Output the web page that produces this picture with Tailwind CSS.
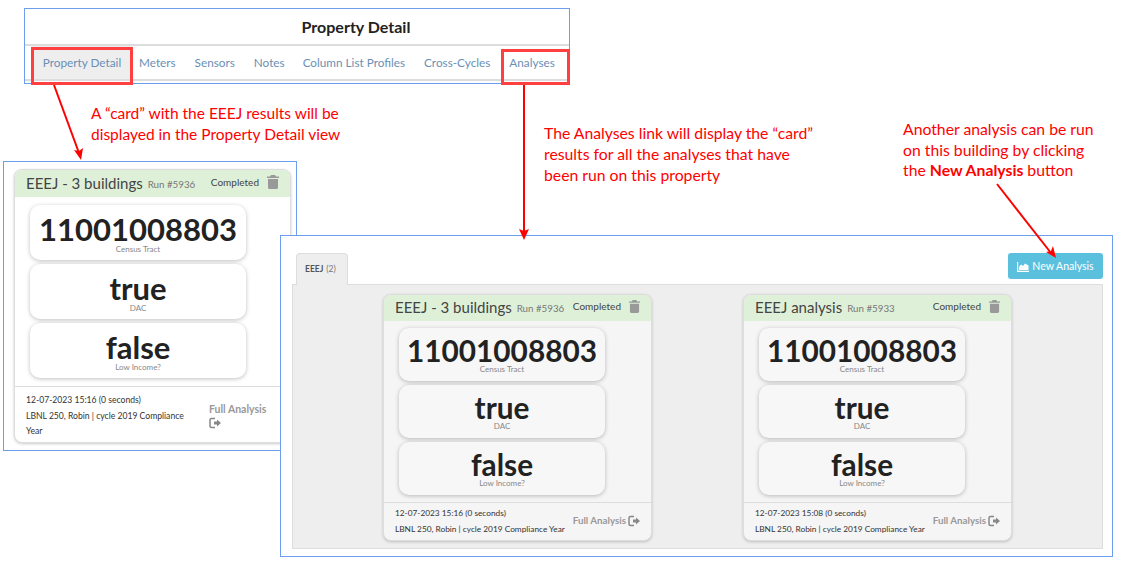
<!DOCTYPE html>
<html lang="en">
<head>
  <meta charset="UTF-8">
  <title>EEEJ Analysis Cards</title>
  <script src="https://cdn.jsdelivr.net/npm/@tailwindcss/browser@4"></script>
</head>
<body class="bg-white">
  <div class="relative w-[1121px] h-[563px] overflow-hidden font-['Lato','Noto_Sans',sans-serif] text-[#333]">

    <!-- Property nav window -->
    <div class="absolute left-[24px] top-[8px] w-[546px] h-[76px] border border-[#6d9eeb] bg-white flex flex-col">
      <div class="h-[37px] flex items-center justify-center pl-[118px] border-b-2 border-[#ddd] text-[16px] font-bold text-[#222]">Property Detail</div>
      <div class="h-[35px] flex items-center pl-[7px] border-b-2 border-[#ddd] text-[11.75px] text-[#6a8fb5] whitespace-nowrap">
        <div class="w-[100px] h-full flex items-center justify-center bg-[#eee] pt-[1px]">Property Detail</div>
        <div class="ml-[7px] pt-[1px]">Meters</div>
        <div class="ml-[19px] pt-[1px]">Sensors</div>
        <div class="ml-[19px] pt-[1px]">Notes</div>
        <div class="ml-[18px] pt-[1px]">Column List Profiles</div>
        <div class="ml-[19px] pt-[1px]">Cross-Cycles</div>
        <div class="ml-[19px] pt-[1px]">Analyses</div>
      </div>
    </div>

    <!-- Left window -->
    <div class="absolute left-[3px] top-[161px] w-[294px] h-[290px] border border-[#6d9eeb] bg-white pl-[10px] pt-[7px]">
      <div class="w-[277px] h-[274px] rounded-[8px] border border-[#ddd] bg-white shadow-[0_1px_3px_rgba(0,0,0,0.2)] flex flex-col overflow-hidden">
        <div class="h-[27px] shrink-0 flex items-center bg-[#dff0d8] pl-[11px] pr-[11px] whitespace-nowrap">
          <span class="text-[15px] text-[#444] leading-none -mt-[1px]">EEEJ - 3 buildings</span>
          <span class="ml-[5px] mt-[1px] text-[9.75px] text-[#777]">Run #5936</span>
          <span class="ml-auto text-[10px] text-[#444] -mt-[3px]">Completed</span>
          <svg class="ml-[8px] -mt-[4px]" width="12" height="14" viewBox="0 0 12 14"><path fill="#999" d="M4 0h4l1 1.500h3v1.500H0V1.500h3zM1 4h10v8.500A1.500 1.500 0 0 1 9.500 14h-7A1.500 1.500 0 0 1 1 12.500z"/></svg>
        </div>
        <div class="flex flex-col gap-[4px] pl-[15px] pt-[8px] h-[190px] border-b border-[#ddd] shrink-0">
          <div class="w-[216px] h-[55px] rounded-[10px] bg-white shadow-[0_1px_4px_rgba(0,0,0,0.25)] flex flex-col items-center pt-[8px]">
            <div class="text-[31px] font-bold leading-[32px] text-[#222]">11001008803</div>
            <div class="text-[8px] leading-[9px] text-[#888]">Census Tract</div>
          </div>
          <div class="w-[216px] h-[55px] rounded-[10px] bg-white shadow-[0_1px_4px_rgba(0,0,0,0.25)] flex flex-col items-center pt-[8px]">
            <div class="text-[31px] font-bold leading-[32px] text-[#222]">true</div>
            <div class="text-[8px] leading-[9px] text-[#888]">DAC</div>
          </div>
          <div class="w-[216px] h-[55px] rounded-[10px] bg-white shadow-[0_1px_4px_rgba(0,0,0,0.25)] flex flex-col items-center pt-[8px]">
            <div class="text-[31px] font-bold leading-[32px] text-[#222]">false</div>
            <div class="text-[8px] leading-[9px] text-[#888]">Low Income?</div>
          </div>
        </div>
        <div class="flex items-center pl-[11px] pt-[6px] text-[8.6px] leading-[15.500px] text-[#333]">
          <div class="w-[166px]">
            <div>12-07-2023 15:16 (0 seconds)</div>
            <div>LBNL 250, Robin | cycle 2019 Compliance Year</div>
          </div>
          <div class="ml-[17px] -mt-[2px] w-[60px] text-[10.5px] font-bold text-[#999]">
            Full Analysis
            <svg class="block" width="12" height="12" viewBox="0 0 12 12"><path fill="none" stroke="#888" stroke-width="1.500" d="M6 1.500H2.500a1.500 1.500 0 0 0-1.500 1.500v6a1.500 1.500 0 0 0 1.500 1.500H6"/><path fill="#888" d="M5 4.500h3V2.500L12 6 8 9.500v-2H5z"/></svg>
          </div>
        </div>
      </div>
    </div>

    <!-- Analyses window -->
    <div class="absolute left-[280px] top-[235px] w-[833px] h-[322px] border border-[#6d9eeb] bg-white pl-[11px] pr-[9px] pt-[17px]">
      <div class="flex items-start justify-between h-[31px]">
        <div class="ml-[4px] w-[52px] h-[32px] rounded-t-[4px] border border-b-0 border-[#ddd] bg-[#eee] flex items-center pl-[8px] text-[8.500px] text-[#555] z-10">
          <span class="font-bold">EEEJ</span><span class="ml-[3px] text-[#777]">(2)</span>
        </div>
        <div class="w-[95px] h-[26px] rounded-[3px] bg-[#5bc0de] flex items-center justify-center pt-[2px] text-[10.5px] text-white">
          <svg class="mr-[3px]" width="12" height="10" viewBox="0 0 12 10"><path fill="#fff" d="M0 0h1.200v8.800H12V10H0z"/><path fill="#fff" d="M2 8V5l2-2.500L6 4l2-2.500L11.500 3.500V8z"/></svg>
          New Analysis
        </div>
      </div>
      <div class="h-[265px] border border-[#ddd] bg-[#eee] pl-[90px] pt-[9px] flex gap-[91px]">

        <div class="w-[269px] h-[247px] rounded-[8px] border border-[#ddd] bg-[#f5f5f5] shadow-[0_1px_3px_rgba(0,0,0,0.2)] flex flex-col overflow-hidden">
          <div class="h-[26px] shrink-0 flex items-center bg-[#dff0d8] pl-[11px] pr-[11px] whitespace-nowrap">
            <span class="text-[15px] text-[#444] leading-none -mt-[1px]">EEEJ - 3 buildings</span>
            <span class="ml-[5px] mt-[1px] text-[9.75px] text-[#777]">Run #5936</span>
            <span class="ml-auto text-[10px] text-[#444] -mt-[3px]">Completed</span>
            <svg class="ml-[8px] -mt-[4px]" width="11" height="13" viewBox="0 0 12 14"><path fill="#999" d="M4 0h4l1 1.500h3v1.500H0V1.500h3zM1 4h10v8.500A1.500 1.500 0 0 1 9.500 14h-7A1.500 1.500 0 0 1 1 12.500z"/></svg>
          </div>
          <div class="flex flex-col gap-[4px] pl-[15px] pt-[7px] h-[182px] border-b border-[#ddd] shrink-0">
            <div class="w-[206px] h-[53px] rounded-[10px] bg-[#f7f7f7] shadow-[0_1px_4px_rgba(0,0,0,0.25)] flex flex-col items-center pt-[8px]">
              <div class="text-[29.750px] font-bold leading-[29px] text-[#222]">11001008803</div>
              <div class="text-[8px] leading-[9px] text-[#888]">Census Tract</div>
            </div>
            <div class="w-[206px] h-[53px] rounded-[10px] bg-[#f7f7f7] shadow-[0_1px_4px_rgba(0,0,0,0.25)] flex flex-col items-center pt-[8px]">
              <div class="text-[29.750px] font-bold leading-[29px] text-[#222]">true</div>
              <div class="text-[8px] leading-[9px] text-[#888]">DAC</div>
            </div>
            <div class="w-[206px] h-[53px] rounded-[10px] bg-[#f7f7f7] shadow-[0_1px_4px_rgba(0,0,0,0.25)] flex flex-col items-center pt-[8px]">
              <div class="text-[29.750px] font-bold leading-[29px] text-[#222]">false</div>
              <div class="text-[8px] leading-[9px] text-[#888]">Low Income?</div>
            </div>
          </div>
          <div class="flex items-center pl-[11px] pr-[11px] flex-1 text-[8.3px] leading-[15.500px] text-[#333]">
            <div class="whitespace-nowrap">
              <div>12-07-2023 15:16 (0 seconds)</div>
              <div>LBNL 250, Robin | cycle 2019 Compliance Year</div>
            </div>
            <div class="ml-auto -mt-[2px] flex items-center text-[9.75px] font-bold text-[#999] whitespace-nowrap">
              Full Analysis
              <svg class="ml-[2px]" width="12" height="12" viewBox="0 0 12 12"><path fill="none" stroke="#888" stroke-width="1.500" d="M6 1.500H2.500a1.500 1.500 0 0 0-1.500 1.500v6a1.500 1.500 0 0 0 1.500 1.500H6"/><path fill="#888" d="M5 4.500h3V2.500L12 6 8 9.500v-2H5z"/></svg>
            </div>
          </div>
        </div>

        <div class="w-[269px] h-[247px] rounded-[8px] border border-[#ddd] bg-[#f5f5f5] shadow-[0_1px_3px_rgba(0,0,0,0.2)] flex flex-col overflow-hidden">
          <div class="h-[26px] shrink-0 flex items-center bg-[#dff0d8] pl-[11px] pr-[11px] whitespace-nowrap">
            <span class="text-[15px] text-[#444] leading-none -mt-[1px]">EEEJ analysis</span>
            <span class="ml-[5px] mt-[1px] text-[9.75px] text-[#777]">Run #5933</span>
            <span class="ml-auto text-[10px] text-[#444] -mt-[3px]">Completed</span>
            <svg class="ml-[8px] -mt-[4px]" width="11" height="13" viewBox="0 0 12 14"><path fill="#999" d="M4 0h4l1 1.500h3v1.500H0V1.500h3zM1 4h10v8.500A1.500 1.500 0 0 1 9.500 14h-7A1.500 1.500 0 0 1 1 12.500z"/></svg>
          </div>
          <div class="flex flex-col gap-[4px] pl-[15px] pt-[7px] h-[182px] border-b border-[#ddd] shrink-0">
            <div class="w-[206px] h-[53px] rounded-[10px] bg-[#f7f7f7] shadow-[0_1px_4px_rgba(0,0,0,0.25)] flex flex-col items-center pt-[8px]">
              <div class="text-[29.750px] font-bold leading-[29px] text-[#222]">11001008803</div>
              <div class="text-[8px] leading-[9px] text-[#888]">Census Tract</div>
            </div>
            <div class="w-[206px] h-[53px] rounded-[10px] bg-[#f7f7f7] shadow-[0_1px_4px_rgba(0,0,0,0.25)] flex flex-col items-center pt-[8px]">
              <div class="text-[29.750px] font-bold leading-[29px] text-[#222]">true</div>
              <div class="text-[8px] leading-[9px] text-[#888]">DAC</div>
            </div>
            <div class="w-[206px] h-[53px] rounded-[10px] bg-[#f7f7f7] shadow-[0_1px_4px_rgba(0,0,0,0.25)] flex flex-col items-center pt-[8px]">
              <div class="text-[29.750px] font-bold leading-[29px] text-[#222]">false</div>
              <div class="text-[8px] leading-[9px] text-[#888]">Low Income?</div>
            </div>
          </div>
          <div class="flex items-center pl-[11px] pr-[11px] flex-1 text-[8.3px] leading-[15.500px] text-[#333]">
            <div class="whitespace-nowrap">
              <div>12-07-2023 15:08 (0 seconds)</div>
              <div>LBNL 250, Robin | cycle 2019 Compliance Year</div>
            </div>
            <div class="ml-auto -mt-[2px] flex items-center text-[9.75px] font-bold text-[#999] whitespace-nowrap">
              Full Analysis
              <svg class="ml-[2px]" width="12" height="12" viewBox="0 0 12 12"><path fill="none" stroke="#888" stroke-width="1.500" d="M6 1.500H2.500a1.500 1.500 0 0 0-1.500 1.500v6a1.500 1.500 0 0 0 1.500 1.500H6"/><path fill="#888" d="M5 4.500h3V2.500L12 6 8 9.500v-2H5z"/></svg>
            </div>
          </div>
        </div>

      </div>
    </div>

    <!-- Red callout boxes -->
    <div class="absolute left-[31px] top-[47px] w-[102px] h-[38px] border-[3px] border-[#ff4040]"></div>
    <div class="absolute left-[501px] top-[49px] w-[69px] h-[36px] border-[3px] border-[#ff4040]"></div>

    <!-- Annotations -->
    <div class="absolute left-[91px] top-[103px] text-[15.5px] leading-[20.500px] text-[#ff0000] whitespace-nowrap">A “card” with the EEEJ results will be<br>displayed in the Property Detail view</div>
    <div class="absolute left-[544px] top-[123px] text-[15.75px] leading-[20.750px] text-[#ff0000] whitespace-nowrap">The Analyses link will display the “card”<br>results for all the analyses that have<br>been run on this property</div>
    <div class="absolute left-[903px] top-[119px] text-[15.75px] leading-[20.500px] text-[#ff0000] whitespace-nowrap">Another analysis can be run<br>on this building by clicking<br>the <b>New Analysis</b> button</div>

    <!-- Arrows -->
    <svg class="absolute left-0 top-0 pointer-events-none" width="1121" height="563" viewBox="0 0 1121 563">
      <g stroke="#ff0000" stroke-width="2" fill="#ff0000">
        <line x1="54" y1="85" x2="79" y2="153"/>
        <path stroke="none" d="M81 160l-7-10 5 1 4-3z"/>
        <line x1="524" y1="85" x2="524" y2="234"/>
        <path stroke="none" d="M524 240l-5-11 5 2 5-2z"/>
        <line x1="997" y1="184" x2="1051" y2="253"/>
        <path stroke="none" d="M1056 258l-10-6 5-1 2-5z"/>
      </g>
    </svg>
  </div>
</body>
</html>
